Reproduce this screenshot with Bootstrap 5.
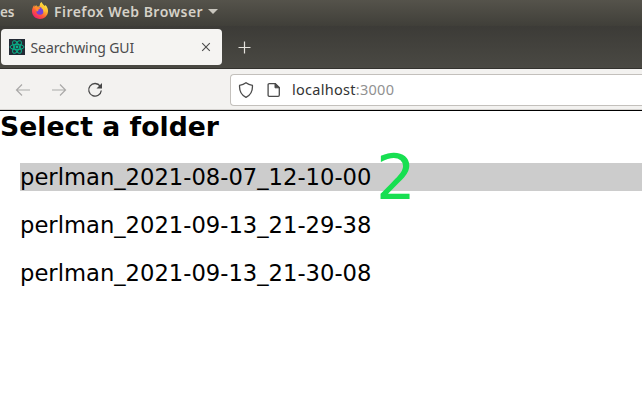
<!DOCTYPE html>
<html lang="en">
<head>
<meta charset="utf-8">
<title>Searchwing GUI</title>
<link href="https://cdn.jsdelivr.net/npm/bootstrap@5.3.0/dist/css/bootstrap.min.css" rel="stylesheet">
<style>
body{width:642px;height:408px;font-family:"Noto Sans",sans-serif;line-height:1}
.topbar{height:26px;background:linear-gradient(#55534b,#403f39);color:#d5d1c8;font-size:14px;font-weight:600;line-height:24px}
.topbar .cut{width:12px;font-size:13.5px;letter-spacing:-.2px}
.fox-logo{margin:2px 0 0 19px}
.caret-mark{margin:9px 0 0 4px}
.topbar .appname{width:150px;margin-left:5px;letter-spacing:.46px}
.tabstrip{height:42px;background:linear-gradient(#3c3b37,#4a4943);padding:3px 0 3px 1px}
.browser-tab{width:221px;height:36px;background:#f5f4f2;border-radius:4px;color:#4b4b4d;font-size:14px;padding-left:8px}
.browser-tab .caption-text{margin-left:5.5px;letter-spacing:-.1px;width:170px;padding-top:1px}
.new-tab{margin-left:16px}
.addressrow{height:43px;background:#f3f2f0;border-top:1px solid #33322e;border-bottom:1px solid #000;box-shadow:inset 0 -1px #d5d3d0}
.addressrow .tools{width:230px;padding-left:15px;gap:20px}
.urlfield{height:32px;background:#fff;border:1px solid #c3c0bc;border-right:0;border-radius:4px 0 0 4px;font-size:14.5px;color:#333;padding-left:7px}
.doc-icon{margin-left:13px}
.urlfield .address{margin-left:11px;letter-spacing:.28px}
.urlfield .port{color:#919191}
.page{font-family:"DejaVu Sans",sans-serif;color:#000}
.page h1{font-size:26.67px;font-weight:700;line-height:32px;margin:0 0 20px}
.folder{font-size:22.67px;line-height:28px;height:28px;margin:0 0 20px 20px}
.folder.active-row{background:#ccc}
.step{left:376px;top:146px;font:62.5px/64px "DejaVu Sans",sans-serif;color:#17df51}
</style>
<script src="https://cdn.jsdelivr.net/npm/bootstrap@5.3.0/dist/js/bootstrap.bundle.min.js"></script>
</head>
<body class="bg-white overflow-hidden position-relative">
<header class="topbar d-flex">
  <div class="cut flex-shrink-0">es</div>
  <svg class="fox-logo flex-shrink-0" width="18" height="18" viewBox="0 0 18 18">
    <defs>
      <linearGradient id="fire" x1=".85" y1=".1" x2=".25" y2="1"><stop offset="0" stop-color="#fff04a"/><stop offset=".35" stop-color="#ffb52e"/><stop offset=".65" stop-color="#ff5a38"/><stop offset="1" stop-color="#ee1877"/></linearGradient>
    </defs>
    <path fill="url(#fire)" d="M9.3 1C10 .8 10.4.5 10.7 0c.4 1.9 2 2.7 3.2 4.100l.4-1.100C16.200 4.600 17.300 7 17 9.800 16.600 14 13.200 17 9 17 4.500 17 1 13.700 1 9.300 1 6.800 1.800 4.800 3.200 3l.4 1.800L5.300 3l.6 1.600h2.500z"/>
    <circle cx="9" cy="9" r="3.700" fill="#7541d8"/>
    <path fill="#ff8b2c" d="M4.200 5.500 6 4.700l2 .5 1.200.7c-.3 1.100-1.800 1.200-2.100 2L7.500 9 5.600 9.600z"/>
    <path fill="#ffc832" d="M10 1.800c2 1.400 4.200 3.900 3.800 6.900l-1.300 2.200c.3-2.400-.5-4-2.500-4.900l1.200-1.300z"/>
  </svg>
  <div class="appname text-nowrap flex-shrink-0">Firefox Web Browser</div>
  <svg class="caret-mark" width="10" height="6" viewBox="0 0 10 6"><path fill="#c9c6be" d="M0 0h10L5 5z"/></svg>
</header>
<div class="tabstrip d-flex align-items-center">
  <div class="browser-tab d-flex align-items-center flex-shrink-0">
    <svg width="16" height="16" viewBox="0 0 16 16" class="flex-shrink-0">
      <rect width="16" height="16" fill="#242a35"/>
      <g fill="none" stroke="#08b58b" stroke-width="1"><ellipse cx="8" cy="8" rx="7" ry="2.700"/><ellipse cx="8" cy="8" rx="7" ry="2.700" transform="rotate(60 8 8)"/><ellipse cx="8" cy="8" rx="7" ry="2.700" transform="rotate(120 8 8)"/></g>
      <circle cx="8" cy="8" r="1.400" fill="#08b58b"/>
    </svg>
    <span class="caption-text text-nowrap">Searchwing GUI</span>
    <svg width="10" height="10" viewBox="0 0 10 10"><path d="M1.200 1.200l7.600 7.600M8.800 1.200 1.200 8.800" stroke="#4b4b4b" stroke-width="1.100"/></svg>
  </div>
  <svg class="new-tab" width="13" height="13" viewBox="0 0 13 13"><path d="M6.500.5v12M.5 6.500h12" stroke="#e4e2dd" stroke-width="1.200"/></svg>
</div>
<nav class="addressrow d-flex align-items-center">
  <div class="tools d-flex align-items-center flex-shrink-0">
    <svg width="16" height="14" viewBox="0 0 16 14"><path d="M15 7H1.500M7 1.500 1.500 7 7 12.500" fill="none" stroke="#aaa9a8" stroke-width="1.200"/></svg>
    <svg width="16" height="14" viewBox="0 0 16 14"><path d="M1 7h13.500M9 1.500 14.500 7 9 12.500" fill="none" stroke="#aaa9a8" stroke-width="1.200"/></svg>
    <svg width="16" height="16" viewBox="0 0 16 16"><path d="M13.200 4.200A6.300 6.300 0 1 0 14.300 8.500" fill="none" stroke="#474747" stroke-width="1.300"/><path d="M15 1v5.500H9.500z" fill="#474747"/></svg>
  </div>
  <div class="urlfield d-flex align-items-center flex-grow-1">
    <svg width="16" height="16" viewBox="0 0 16 16"><path d="M8 .8c1.800 1.500 4 2.300 6.400 2.500C14.800 8.500 13 13 8 15.300 3 13 1.200 8.500 1.600 3.300 4 3.100 6.200 2.300 8 .8z" fill="none" stroke="#4b4b4b" stroke-width="1.300"/></svg>
    <svg class="doc-icon" width="14" height="16" viewBox="0 0 14 16"><path d="M2.300 1.600h6l4 4v7.500q0 1.200-1.200 1.200H2.300q-1.200 0-1.200-1.200V2.800q0-1.200 1.200-1.200z" fill="none" stroke="#4b4b4b" stroke-width="1.300"/><path d="M8 1.500v4.300h4.400z" fill="#4b4b4b" stroke="#4b4b4b"/></svg>
    <span class="address">localhost<span class="port">:3000</span></span>
  </div>
</nav>
<main class="page">
  <h1>Select a folder</h1>
  <div class="folder active-row">perlman_2021-08-07_12-10-00</div>
  <div class="folder">perlman_2021-09-13_21-29-38</div>
  <div class="folder">perlman_2021-09-13_21-30-08</div>
</main>
<div class="step position-absolute">2</div>
</body>
</html>
